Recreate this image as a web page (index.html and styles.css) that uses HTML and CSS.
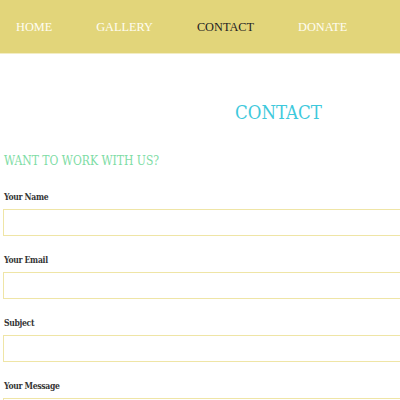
FILE: index.html
```html
<!DOCTYPE html>
<html>
<head>
<meta charset="utf-8">
<link rel="stylesheet" href="styles.css">
</head>
<body>
<nav class="nav">
  <a class="nav-item">HOME</a>
  <a class="nav-item">GALLERY</a>
  <a class="nav-item active">CONTACT</a>
  <a class="nav-item">DONATE</a>
</nav>
<main class="page">
  <h1 class="title">CONTACT</h1>
  <h2 class="subtitle">WANT TO WORK WITH US?</h2>
  <form class="form">
    <label class="field"><span class="label">Your Name</span><input class="input" type="text"></label>
    <label class="field"><span class="label">Your Email</span><input class="input" type="text"></label>
    <label class="field"><span class="label">Subject</span><input class="input" type="text"></label>
    <label class="field"><span class="label">Your Message</span><textarea class="input area"></textarea></label>
  </form>
</main>
</body>
</html>
```
FILE: styles.css
```css
html, body { margin: 0; padding: 0; overflow: hidden; background: #fff; }
body { font-family: "Liberation Serif", serif; width: 554px; }
.nav {
  background: #e2d57a;
  height: 54px;
  display: flex;
  align-items: center;
  gap: 44px;
  padding-left: 16px;
  padding-bottom: 0;
  border-bottom: 1px solid #f3edc4;
  box-sizing: border-box;
}
.nav-item {
  font-size: 12.3px;
  line-height: 16px;
  color: #fffdf2;
  text-decoration: none;
}
.nav-item.active { color: #222; }
.page { padding: 0 0 0 3px; }
.title {
  margin: 47px 0 0 0;
  font-family: "DejaVu Serif Condensed", "DejaVu Serif", serif;
  font-stretch: condensed;
  font-weight: normal;
  font-size: 18.5px;
  line-height: 24px;
  color: #3ec9dc;
  text-align: center;
}
.subtitle {
  margin: 28px 0 0 1px;
  font-family: "DejaVu Serif Condensed", "DejaVu Serif", serif;
  font-stretch: condensed;
  font-weight: normal;
  font-size: 12px;
  line-height: 16px;
  color: #7ddca4;
}
.form { display: flex; flex-direction: column; margin-top: 22px; }
.field { display: flex; flex-direction: column; }
.label {
  font-family: "DejaVu Serif Condensed", "DejaVu Serif", serif;
  font-stretch: condensed;
  font-size: 8.5px; line-height: 12px; color: #333; font-weight: bold;
  letter-spacing: -0.3px;
  padding-left: 1px; margin-bottom: 6px;
}
.input {
  box-sizing: border-box;
  height: 27px;
  width: 100%;
  border: 1px solid #efe5a6;
  margin: 0 0 18px 0;
  padding: 0;
  background: #fff;
  display: block;
}
.area { height: 80px; resize: none; }
```
